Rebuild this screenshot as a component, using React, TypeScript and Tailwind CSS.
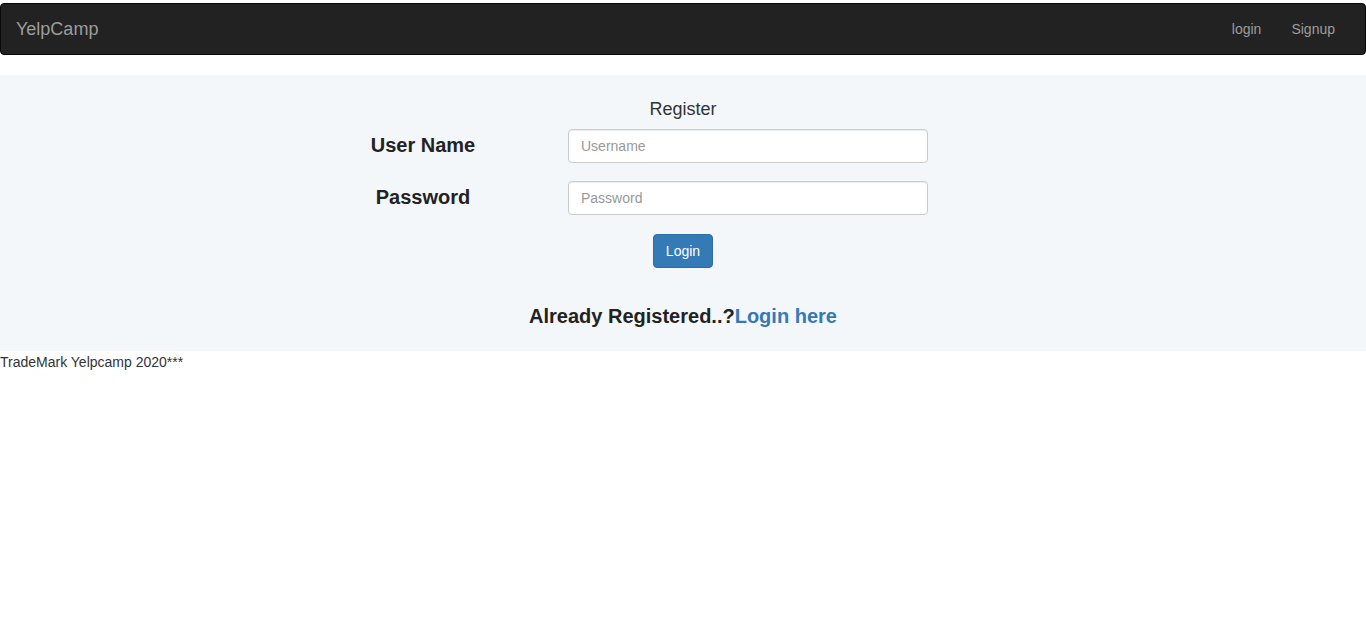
import React from 'react';

const App: React.FC = () => {
  return (
    <div className="min-h-screen bg-white text-[14px] leading-[20px] text-[#333]" style={{ fontFamily: '"Liberation Sans", Arial, sans-serif' }}>
      {/* Navbar */}
      <nav className="mt-[3px] h-[52px] bg-[#222] border border-[#080808] rounded-[4px] flex items-center justify-between">
        <a className="pl-[15px] text-[18px] leading-[20px] text-[#9d9d9d]">YelpCamp</a>
        <ul className="flex pr-[15px]">
          <li><a className="block px-[15px] text-[#9d9d9d]">login</a></li>
          <li><a className="block px-[15px] text-[#9d9d9d]">Signup</a></li>
        </ul>
      </nav>

      {/* Jumbotron */}
      <div className="mt-[20px] bg-[#f3f7fa] pt-[24px] h-[276px]">
        <p className="text-center text-[18px] leading-[20px] text-[#333]">Register</p>
        <form className="mx-auto w-[690px] mt-[10px]">
          <div className="flex items-center">
            <label className="w-[170px] text-center text-[20px] leading-[22px] -mt-[2px] font-bold text-[#222]">User Name</label>
            <input
              placeholder="Username"
              className="ml-[60px] w-[360px] h-[34px] px-[12px] text-[14px] bg-white border border-[#ccc] rounded-[4px] shadow-[inset_0_1px_1px_rgba(0,0,0,0.075)] placeholder:text-[#999] outline-none"
            />
          </div>
          <div className="flex items-center mt-[18px]">
            <label className="w-[170px] text-center text-[20px] leading-[22px] -mt-[2px] font-bold text-[#222]">Password</label>
            <input
              type="password"
              placeholder="Password"
              className="ml-[60px] w-[360px] h-[34px] px-[12px] text-[14px] bg-white border border-[#ccc] rounded-[4px] shadow-[inset_0_1px_1px_rgba(0,0,0,0.075)] placeholder:text-[#999] outline-none"
            />
          </div>
          <div className="flex justify-center mt-[19px]">
            <button type="button" className="w-[60px] h-[34px] bg-[#337ab7] border border-[#2e6da4] rounded-[4px] text-white text-[14px]">
              Login
            </button>
          </div>
        </form>
        <p className="mt-[36px] text-center text-[20px] leading-[24px] font-bold text-[#222]">
          Already Registered..?<a className="text-[#337ab7]">Login here</a>
        </p>
      </div>

      {/* Footer */}
      <p className="mt-[1px]">TradeMark Yelpcamp 2020***</p>
    </div>
  );
};

export default App;
